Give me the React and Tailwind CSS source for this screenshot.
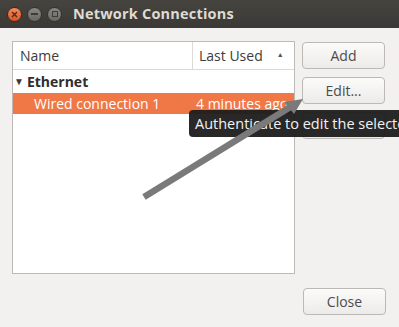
export default function App() {
  return (
    <div className="relative w-[399px] h-[327px] overflow-hidden bg-[#f2f1f0] font-['Open_Sans',sans-serif] text-[14px] text-[#3c3c3c]">
      {/* Title bar */}
      <div className="flex h-[28px] items-center bg-gradient-to-b from-[#45443f] to-[#3a3935] pl-[7px]">
        <div className="flex items-center gap-[5px]">
          <div className="flex h-[15px] w-[15px] items-center justify-center rounded-full bg-gradient-to-b from-[#f68b5d] to-[#df4f1e] border border-[#3a2a20]">
            <svg width="7" height="7" viewBox="0 0 7 7">
              <path d="M1 1L6 6M6 1L1 6" stroke="#4a2a1c" strokeWidth="1.4" />
            </svg>
          </div>
          <div className="flex h-[15px] w-[15px] items-center justify-center rounded-full bg-gradient-to-b from-[#8a8883] to-[#6a6864] border border-[#33322f]">
            <div className="h-[1.5px] w-[7px] bg-[#3d3c38]" />
          </div>
          <div className="flex h-[15px] w-[15px] items-center justify-center rounded-full bg-gradient-to-b from-[#8a8883] to-[#6a6864] border border-[#33322f]">
            <div className="h-[6px] w-[6px] border border-[#3d3c38]" />
          </div>
        </div>
        <span className="ml-[11px] text-[14.5px] font-bold tracking-[0.2px] text-[#dfdbd2]">Network Connections</span>
      </div>

      {/* Body */}
      <div className="flex px-[12px] pt-[13px]">
        <div className="h-[233px] w-[283px] border border-[#bdbab5] bg-white">
          <div className="flex h-[28px] border-b border-[#dcdad5] text-[#3c3c3c]">
            <div className="flex w-[180px] items-center border-r border-[#dcdad5] pl-[7px]">Name</div>
            <div className="flex flex-1 items-center pl-[6px]">
              Last Used
              <span className="ml-[14px] text-[7px] text-[#555]">▲</span>
            </div>
          </div>
          <div className="flex h-[23px] items-center pl-[1px] font-bold text-[#2e2e2e]">
            <span className="mr-[3px] text-[10px] text-[#3a3a3a]">▼</span>
            Ethernet
          </div>
          <div className="flex h-[21px] items-center overflow-hidden whitespace-nowrap bg-[#f07746] text-white">
            <span className="w-[180px] pl-[21px]">Wired connection 1</span>
            <span className="pl-[3px]">4 minutes ago</span>
          </div>
        </div>

        <div className="ml-[7px] flex w-[83px] flex-col gap-[8px] pt-[1px]">
          <button className="h-[27px] rounded-[4px] border border-[#bcb8b3] bg-gradient-to-b from-[#fbfbfa] to-[#ecebe9] text-[#4c4c4c]">Add</button>
          <button className="h-[27px] rounded-[4px] border border-[#bcb8b3] bg-gradient-to-b from-[#fbfbfa] to-[#ecebe9] text-[#4c4c4c]">Edit...</button>
          <button className="h-[27px] rounded-[4px] border border-[#bcb8b3] bg-gradient-to-b from-[#fbfbfa] to-[#ecebe9]" />
        </div>
      </div>

      <div className="flex justify-end pr-[13px] pt-[14px]">
        <button className="h-[27px] w-[83px] rounded-[4px] border border-[#bcb8b3] bg-gradient-to-b from-[#fbfbfa] to-[#ecebe9] text-[#4c4c4c]">Close</button>
      </div>

      {/* Tooltip */}
      <div className="absolute left-[189px] top-[110px] flex h-[27px] w-[240px] items-center whitespace-nowrap rounded-[4px] bg-[#1c1c1c]/95 pl-[6px] text-[14.5px] text-[#f2f2f2]">
        Authenticate to edit the selected connection
      </div>

      {/* Annotation arrow */}
      <svg className="absolute left-0 top-0" width="399" height="327" viewBox="0 0 399 327">
        <line x1="144" y1="197" x2="292" y2="106" stroke="#7a7a7a" strokeWidth="6.5" strokeLinecap="butt" />
        <polygon points="303,99 284,102 294,114" fill="#7a7a7a" />
      </svg>
    </div>
  );
}
